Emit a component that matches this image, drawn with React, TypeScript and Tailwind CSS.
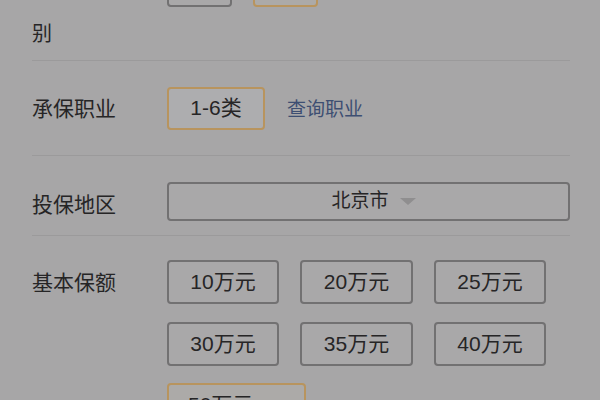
import React from "react";

const font = { fontFamily: '"Liberation Sans", "Noto Sans CJK SC", sans-serif' };

function Btn({ children, active, w, className = "" }: { children?: React.ReactNode; active?: boolean; w: string; className?: string }) {
  return (
    <div
      className={`${w} h-[44px] flex items-center justify-center rounded-[4px] border-2 text-[21px] text-[#262526] ${
        active ? "border-[#b8945e] bg-[#acaaa8]" : "border-[#727172] bg-[#a9a8a9]"
      } ${className}`}
    >
      {children}
    </div>
  );
}

export default function App() {
  return (
    <div className="w-[600px] h-[400px] overflow-hidden bg-[#a7a6a7]" style={font}>
      <div className="pl-[32px] pr-[30px]">
        {/* Row 1: 性别 */}
        <div className="flex -mt-[37px] h-[98px] border-b border-[#9b9a9b]">
          <div className="w-[135px] pt-[5px] text-[20px] leading-[44px] text-[#262526]">
            <span className="invisible">性</span>
            <br />别
          </div>
          <div className="flex gap-x-[21px]">
            <Btn w="w-[65px]" className="h-[43px]" />
            <Btn w="w-[65px]" active className="h-[43px]" />
          </div>
        </div>
        {/* Row 2: 承保职业 */}
        <div className="flex items-center h-[95px] border-b border-[#9b9a9b]">
          <div className="w-[135px] text-[21px] text-[#262526] mt-[2px]">承保职业</div>
          <div className="w-[98px] h-[43px] flex items-center justify-center rounded-[4px] border-2 border-[#b8945e] bg-[#adadaf] text-[21px] text-[#262526]">
            1-6类
          </div>
          <div className="ml-[22px] text-[19px] text-[#3d4e72] mt-[4px]">查询职业</div>
        </div>
        {/* Row 3: 投保地区 */}
        <div className="flex items-start h-[80px] border-b border-[#9b9a9b] pt-[26px]">
          <div className="w-[135px] text-[21px] text-[#262526] leading-[28px] mt-[9px]">投保地区</div>
          <div className="flex-1 h-[39px] flex items-center justify-center rounded-[4px] border-2 border-[#727172] bg-[#a9a8a9]">
            <span className="text-[19px] text-[#262526] ml-[10px]">北京市</span>
            <svg width="16" height="8" viewBox="0 0 16 8" className="ml-[11px]">
              <polygon points="0,0 16,0 8,7" fill="#8f8e8f" />
            </svg>
          </div>
        </div>
        {/* Row 4: 基本保额 */}
        <div className="flex items-start pt-[24px]">
          <div className="w-[135px] text-[21px] text-[#262526] leading-[28px] mt-[9px]">基本保额</div>
          <div className="flex flex-col gap-y-[18px]">
            <div className="flex gap-x-[21px]">
              <Btn w="w-[112px]">10万元</Btn>
              <Btn w="w-[113px]">20万元</Btn>
              <Btn w="w-[112px]">25万元</Btn>
            </div>
            <div className="flex gap-x-[21px]">
              <Btn w="w-[112px]">30万元</Btn>
              <Btn w="w-[113px]">35万元</Btn>
              <Btn w="w-[112px]">40万元</Btn>
            </div>
            <div className="flex -mt-[1px]">
              <Btn w="w-[139px]" active className="justify-start pl-[19px]">50万元</Btn>
            </div>
          </div>
        </div>
      </div>
    </div>
  );
}
